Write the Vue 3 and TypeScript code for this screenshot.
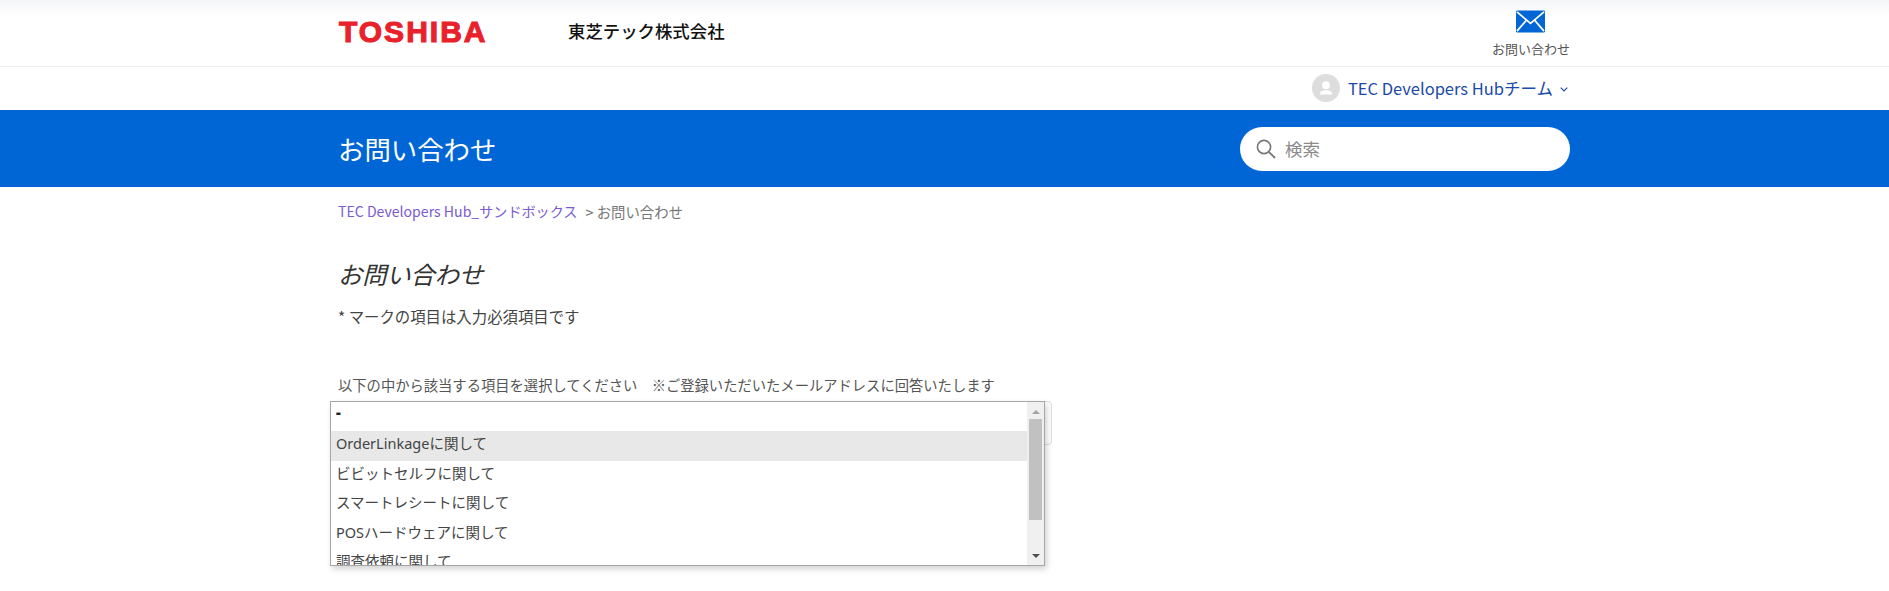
<script setup lang="ts">
const options: string[] = [
  '-',
  'OrderLinkageに関して',
  'ビビットセルフに関して',
  'スマートレシートに関して',
  'POSハードウェアに関して',
  '調査依頼に関して',
]
</script>

<template>
  <div class="page">
    <header class="top">
      <div class="wrap top-inner">
        <span class="logo">TOSHIBA</span>
        <span class="company">東芝テック株式会社</span>
        <a class="contact">
          <svg class="mail" width="29" height="23" viewBox="0 0 30 23" aria-hidden="true">
            <rect x="0" y="0" width="30" height="23" rx="1.5" fill="#0066d6" />
            <path d="M1 1.5 L15 13.5 L29 1.5 M1 21.5 L10.5 10.5 M29 21.5 L19.5 10.5" fill="none" stroke="#fff" stroke-width="1.8" />
          </svg>
          <span class="contact-label">お問い合わせ</span>
        </a>
      </div>
    </header>

    <div class="user-row">
      <div class="wrap user-inner">
        <span class="avatar">
          <svg width="28" height="28" viewBox="0 0 28 28" aria-hidden="true">
            <circle cx="14" cy="14" r="14" fill="#dddddd" />
            <circle cx="14" cy="11.2" r="3.9" fill="#fff" />
            <path d="M7.8 20.5 C7.8 17.2 10.5 16.2 14 16.2 C17.5 16.2 20.2 17.2 20.2 20.5 Z" fill="#fff" />
          </svg>
        </span>
        <span class="user-name">TEC Developers Hubチーム</span>
        <svg class="chevron" width="8" height="5" viewBox="0 0 8 5" aria-hidden="true">
          <path d="M0.7 0.7 L4 4 L7.3 0.7" fill="none" stroke="#1b4aa8" stroke-width="1.1" />
        </svg>
      </div>
    </div>

    <section class="banner">
      <div class="wrap banner-inner">
        <h1 class="banner-title">お問い合わせ</h1>
        <div class="search">
          <svg width="20" height="20" viewBox="0 0 20 20" aria-hidden="true">
            <circle cx="8" cy="8" r="6.6" fill="none" stroke="#777" stroke-width="1.6" />
            <path d="M12.8 12.8 L19 19" fill="none" stroke="#777" stroke-width="1.8" />
          </svg>
          <span class="placeholder">検索</span>
        </div>
      </div>
    </section>

    <main class="wrap content">
      <nav class="crumbs">
        <a class="crumb-link">TEC Developers Hub_サンドボックス</a>
        <span class="crumb-current">&gt; お問い合わせ</span>
      </nav>
      <h2 class="form-title">お問い合わせ</h2>
      <p class="note">* マークの項目は入力必須項目です</p>
      <label class="field-label">以下の中から該当する項目を選択してください　※ご登録いただいたメールアドレスに回答いたします</label>
      <div class="select">
        <div class="popup">
          <ul class="list">
            <li
              v-for="(option, index) in options"
              :key="option"
              class="option"
              :class="{ active: index === 1, dash: index === 0 }"
            >{{ option }}</li>
          </ul>
          <div class="scrollbar">
            <span class="arrow up"></span>
            <span class="thumb"></span>
            <span class="arrow down"></span>
          </div>
        </div>
      </div>
    </main>
  </div>
</template>

<style>
html, body { margin: 0; overflow: hidden; background: #fff; }
</style>

<style scoped>
.page {
  height: 591px;
  overflow: hidden;
  font-family: "Noto Sans CJK JP", "Noto Sans", sans-serif;
  color: #444;
}
.wrap { width: 1232px; margin-left: 338px; box-sizing: border-box; }
.top {
  height: 67px;
  box-sizing: border-box;
  border-bottom: 1px solid #ececec;
  background: linear-gradient(#f4f5f7, #ffffff 16px);
}
.top-inner { height: 66px; display: flex; align-items: center; position: relative; }
.logo {
  width: 229px;
  margin-left: 1px;
  font-family: "Liberation Sans", sans-serif;
  font-weight: 700;
  font-size: 30px;
  line-height: 30px;
  letter-spacing: 2px;
  color: #e8212b;
  -webkit-text-stroke: 1.1px #e8212b;
  margin-top: -3px;
}
.company {
  font-size: 17.4px;
  font-weight: 500;
  color: #111;
  margin-top: -5px;
}
.contact {
  margin-left: auto;
  display: flex;
  flex-direction: column;
  align-items: center;
  align-self: flex-start;
  padding-top: 10px;
}
.mail { display: block; }
.contact-label { font-size: 13px; line-height: 18px; margin-top: 7px; color: #555; }
.user-row { height: 43px; }
.user-inner { height: 43px; display: flex; align-items: center; justify-content: flex-end; padding-right: 2px; }
.avatar { width: 28px; height: 28px; margin-right: 8px; margin-top: -2px; }
.user-name { font-size: 16.5px; color: #1b4aa8; margin-top: -2px; }
.chevron { margin-left: 7px; margin-top: 1px; }
.banner { height: 77px; background: #0066d6; }
.banner-inner { height: 77px; display: flex; align-items: center; justify-content: space-between; }
.banner-title { margin: 0; font-size: 26.4px; font-weight: 400; color: #fff; }
.search {
  width: 330px;
  height: 44px;
  box-sizing: border-box;
  background: #fff;
  border-radius: 22px;
  display: flex;
  align-items: center;
  gap: 9px;
  padding-left: 16px;
}
.search svg { display: block; }
.placeholder { font-size: 17.5px; color: #8a8a8a; }
.content { padding-top: 14px; }
.crumbs { height: 20px; display: flex; align-items: center; gap: 8px; }
.crumb-link { color: #7a5bd1; font-size: 14.1px; }
.crumb-current { color: #777; font-size: 14.4px; }
.form-title {
  margin: 35px 0 0;
  font-size: 24.2px;
  line-height: 36px;
  font-weight: 400;
  font-style: italic;
  color: #333;
}
.note { margin: 12px 0 0; font-size: 15.4px; line-height: 24px; color: #444; }
.field-label { display: block; margin-top: 45px; font-size: 14.3px; line-height: 24px; color: #555; }
.select {
  position: relative;
  width: 714px;
  height: 44px;
  margin-top: 4px;
  box-sizing: border-box;
  border: 1px solid #dddddd;
  border-radius: 4px;
}
.popup {
  position: absolute;
  left: -9px;
  top: -1px;
  width: 715px;
  height: 165px;
  box-sizing: border-box;
  display: flex;
  background: #fff;
  border: 1px solid #a6a6a6;
  box-shadow: 2px 3px 6px rgba(0, 0, 0, 0.18);
}
.list { list-style: none; margin: 0; padding: 0; flex: 1; overflow: hidden; }
.option {
  height: 29.6px;
  line-height: 24px;
  padding-left: 5px;
  font-family: "Noto Sans", "Noto Sans CJK JP", sans-serif;
  font-size: 14.5px;
  color: #444;
  white-space: nowrap;
}
.option.active { background: #e8e8e8; }
.option.dash { height: 29px; font-weight: 900; color: #222; font-size: 15px; line-height: 21px; }
.scrollbar {
  width: 17px;
  background: #f0f0f0;
  display: flex;
  flex-direction: column;
  align-items: center;
  position: relative;
}
.arrow { width: 0; height: 0; border-left: 4px solid transparent; border-right: 4px solid transparent; position: absolute; }
.arrow.up { top: 8px; border-bottom: 4px solid #a3a3a3; }
.arrow.down { bottom: 7px; border-top: 4px solid #505050; }
.thumb { width: 13px; height: 101px; margin-top: 17px; background: #c1c1c1; }
</style>
